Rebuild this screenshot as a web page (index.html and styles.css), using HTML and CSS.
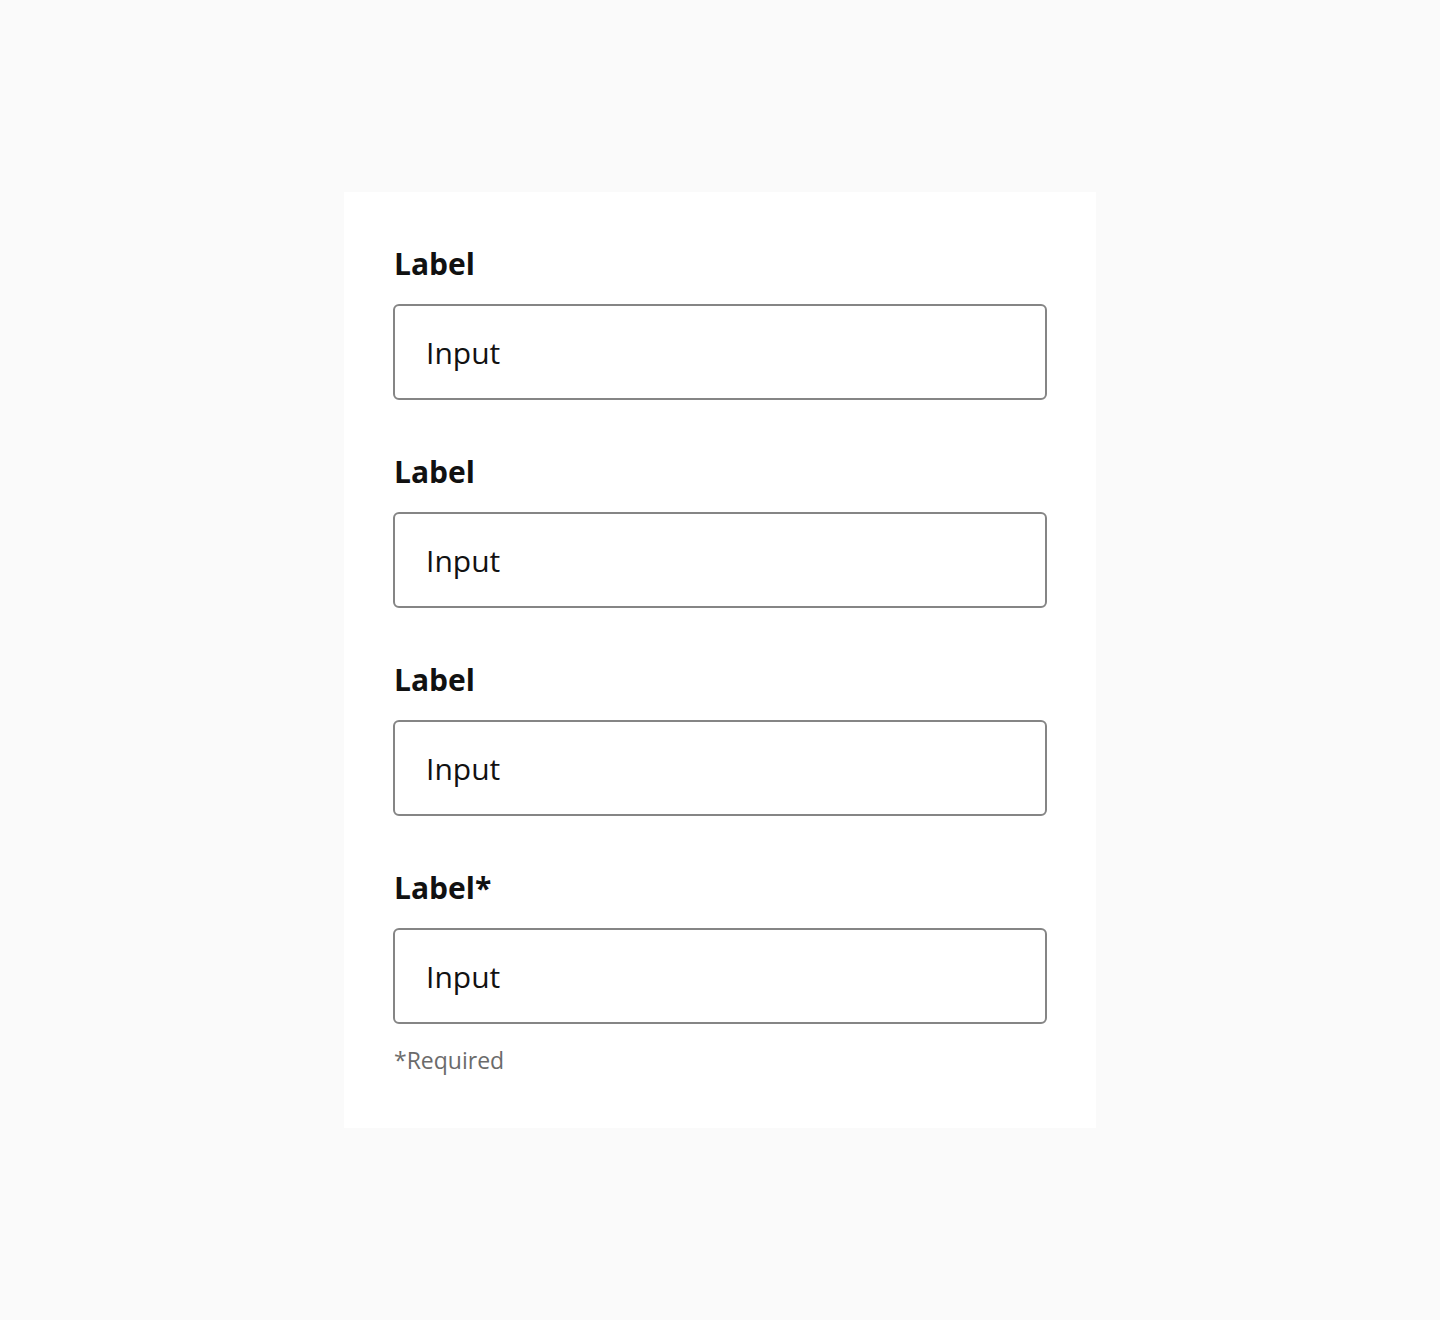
FILE: index.html
```html
<!DOCTYPE html>
<html lang="en">
<head>
  <meta charset="UTF-8" />
  <meta name="viewport" content="width=device-width, initial-scale=1" />
  <title>Form</title>
  <link rel="stylesheet" href="styles.css">
</head>
<body>
  <form class="card">
    <div class="field">
      <label for="f1">Label</label>
      <input type="text" id="f1" value="Input" />
    </div>
    <div class="field">
      <label for="f2">Label</label>
      <input type="text" id="f2" value="Input" />
    </div>
    <div class="field">
      <label for="f3">Label</label>
      <input type="text" id="f3" value="Input" />
    </div>
    <div class="field last">
      <label for="f4">Label*</label>
      <input type="text" id="f4" value="Input" required />
    </div>
    <p class="hint">*Required</p>
  </form>
</body>
</html>
```

FILE: styles.css
```css
body {
  margin: 0;
  background: #fafafa;
  font-family: "Open Sans", Arial, sans-serif;
  color: #111;
}
.card {
  width: 752px;
  box-sizing: border-box;
  margin: 192px auto 0;
  padding: 52px 49px 53px;
  background: #fff;
}
.field {
  display: flex;
  flex-direction: column;
  margin-bottom: 52px;
}
.field.last {
  margin-bottom: 0;
}
label {
  font-weight: 700;
  font-size: 30px;
  line-height: 40px;
  margin-bottom: 20px;
  padding-left: 1px;
}
input[type="text"] {
  height: 96px;
  box-sizing: border-box;
  padding: 0 31px;
  border: 2px solid #858585;
  border-radius: 6px;
  font-family: inherit;
  font-size: 30px;
  color: #111;
  background: #fff;
  outline: none;
}
.hint {
  margin: 21px 0 0;
  padding-left: 1px;
  font-size: 23px;
  line-height: 30px;
  color: #6b6b6b;
}
```
